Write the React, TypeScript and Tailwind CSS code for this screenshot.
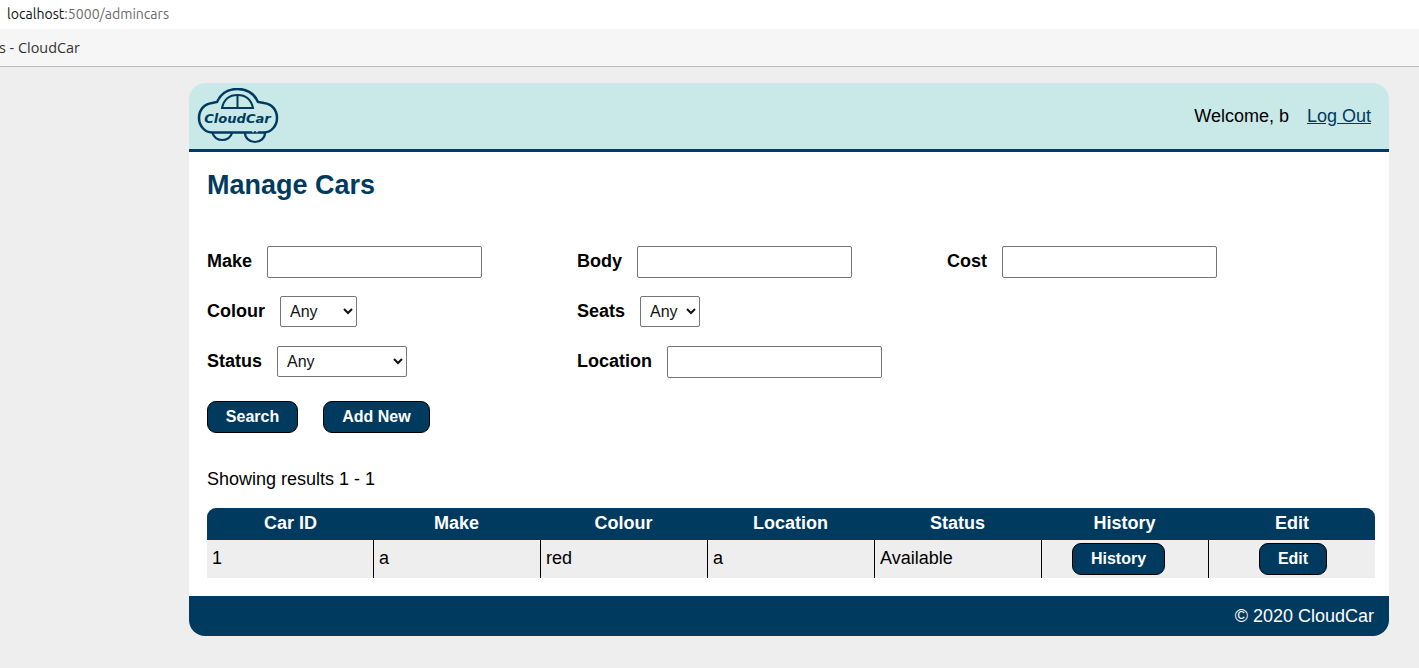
const sans = "font-['Liberation_Sans',Arial,sans-serif]"

function Logo() {
  return (
    <svg width="82" height="56" viewBox="0 0 82 56" fill="none" stroke="#003a5f" strokeWidth="2.5">
      <path d="M20 14 C24 5 32 1 40.5 1 C49 1 57 5 61 14 L67 15 C75 16 80 22 80 30 C80 38 74 44.5 67 44.5 L15 44.5 C8 44.5 2 38 2 30 C2 22 7 16 15 15 Z" />
      <path d="M25 20 C27 11 33 7 40.5 7 C48 7 54 11 56 20 Z" strokeWidth="2" />
      <path d="M40.5 7 L40.5 20" strokeWidth="2" />
      <path d="M15.5 45 A10 9 0 0 0 35 45" strokeWidth="2.2" />
      <path d="M48 45 A10 9 0 0 0 68 45" strokeWidth="2.2" />
      <circle cx="56" cy="43.5" r="0.9" fill="#c8e9e8" stroke="none" />
      <circle cx="60" cy="43.5" r="0.9" fill="#c8e9e8" stroke="none" />
      <text x="40.5" y="35" textAnchor="middle" fill="#003a5f" stroke="none" fontFamily="'DejaVu Sans', sans-serif" fontStyle="italic" fontWeight="700" fontSize="13.1">CloudCar</text>
    </svg>
  )
}

function Label({ children }: { children: React.ReactNode }) {
  return <label className="font-bold text-lg leading-none mr-[15px] pb-[2px]">{children}</label>
}

function TextInput() {
  return <input type="text" className="w-[215px] h-8 bg-white border border-[#767676] rounded-[2px]" />
}

function Select({ width, options }: { width: string; options: string[] }) {
  return (
    <select className={`${width} h-[31px] self-start bg-white border border-[#767676] rounded-[2px] text-base pl-[5px] text-[#111] appearance-auto`}>
      {options.map((o) => (
        <option key={o}>{o}</option>
      ))}
    </select>
  )
}

function Button({ children, className }: { children: React.ReactNode; className?: string }) {
  return (
    <button className={`h-8 bg-[#003a5f] text-white font-bold text-base border border-black rounded-[9px] ${className ?? ""}`}>
      {children}
    </button>
  )
}

const headers = ["Car ID", "Make", "Colour", "Location", "Status", "History", "Edit"]
const cells = ["1", "a", "red", "a", "Available"]

export default function App() {
  return (
    <div className={`${sans} min-h-[668px] bg-[#eeeeee] text-black overflow-hidden`}>
      <div className="h-[29px] bg-white flex items-center pl-[7px] text-[14.1px] font-['Ubuntu','Open_Sans',sans-serif]">
        <span className="text-[#111]">localhost</span>
        <span className="text-[#6b6b6b]">:5000/admincars</span>
      </div>
      <div className="h-[38px] bg-[#f6f6f6] border-b border-[#bdbdbd] flex items-center text-[14.4px] text-[#333] font-['Open_Sans',sans-serif] overflow-hidden">
        <span className="-ml-[1px]">s - CloudCar</span>
      </div>

      <div className="w-[1200px] ml-[189px] mt-4 bg-white rounded-2xl overflow-hidden">
        <header className="h-[69px] bg-[#c8e9e8] border-b-[3px] border-[#003a5f] flex items-start justify-between pl-[8px] pr-[18px] pt-[5px]">
          <Logo />
          <div className="text-lg flex gap-[18px] mt-[14px]">
            <span>Welcome, b</span>
            <a className="underline text-[#003a5f]">Log Out</a>
          </div>
        </header>

        <main className="pt-[16px] pl-[18px] pr-[14px] pb-[18px]">
          <h1 className="text-[27px] leading-[34px] font-bold text-[#003a5f]">Manage Cars</h1>

          <div className="grid grid-cols-[370px_370px_370px] mt-[44px] gap-y-[18px]">
            <div className="flex items-center h-8"><Label>Make</Label><TextInput /></div>
            <div className="flex items-center h-8"><Label>Body</Label><TextInput /></div>
            <div className="flex items-center h-8"><Label>Cost</Label><TextInput /></div>
            <div className="flex items-center h-8"><Label>Colour</Label><Select width="w-[77px]" options={["Any"]} /></div>
            <div className="flex items-center h-8"><Label>Seats</Label><Select width="w-[60px]" options={["Any"]} /></div>
            <div />
            <div className="flex items-center h-8"><Label>Status</Label><Select width="w-[130px]" options={["Any"]} /></div>
            <div className="flex items-center h-8"><Label>Location</Label><TextInput /></div>
          </div>

          <div className="flex gap-[25px] mt-[23px]">
            <Button className="w-[91px]">Search</Button>
            <Button className="w-[107px]">Add New</Button>
          </div>

          <p className="text-lg leading-[22px] mt-[35px]">Showing results 1 - 1</p>

          <div className="mt-[18px] w-[1168px]">
            <div className="grid grid-cols-[repeat(6,167px)_166px] h-8 pb-[2px] bg-[#003a5f] text-white font-bold text-lg rounded-t-[9px] items-center text-center">
              {headers.map((h, i) => (
                <div key={h} className={i === 0 || i === 6 ? "" : "pr-[2px]"}>{h}</div>
              ))}
            </div>
            <div className="grid grid-cols-[repeat(6,167px)_166px] h-[38px] bg-[#eeeeee] text-lg">
              {cells.map((c, i) => (
                <div key={i} className="border-r border-black pl-[5px] pb-[2px] flex items-center">{c}</div>
              ))}
              <div className="border-r border-black pt-[3px] pl-[30px]">
                <Button className="w-[93px]">History</Button>
              </div>
              <div className="pt-[3px] pl-[50px]">
                <Button className="w-[68px]">Edit</Button>
              </div>
            </div>
          </div>
        </main>

        <footer className="h-10 bg-[#003a5f] text-white text-lg flex items-center justify-end pr-[15px]">
          © 2020 CloudCar
        </footer>
      </div>
    </div>
  )
}
